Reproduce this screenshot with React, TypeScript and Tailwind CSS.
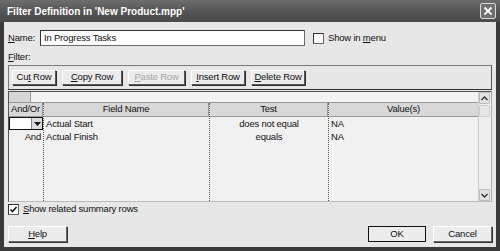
import React from 'react';

const font = { fontFamily: '"Liberation Sans", Arial, sans-serif' };

const U: React.FC<{ children: React.ReactNode }> = ({ children }) => <span className="underline underline-offset-1">{children}</span>;

const ToolButton: React.FC<{ children: React.ReactNode; disabled?: boolean; w: string }> = ({ children, disabled, w }) => (
  <div
    className={`${w} h-[15px] flex items-center justify-center bg-[#ebebeb] border border-t-[#ffffff] border-l-[#ffffff] border-r-[#5a5a5a] border-b-[#5a5a5a] shadow-[1px_1px_0_#2e2e2e] ${disabled ? 'text-[#a8a8a8]' : 'text-[#111]'}`}
  >
    <span className="whitespace-nowrap">{children}</span>
  </div>
);

const DialogButton: React.FC<{ children: React.ReactNode; def?: boolean; w: string }> = ({ children, def, w }) => (
  <div
    className={`${w} h-[16px] flex items-center justify-center text-[#111] bg-[#ececec] ${def ? 'border border-[#111]' : 'border border-t-[#ffffff] border-l-[#ffffff] border-r-[#6a6a6a] border-b-[#6a6a6a] shadow-[1px_1px_0_#333]'}`}
  >
    <span className="whitespace-nowrap">{children}</span>
  </div>
);

const cols = [
  { w: 'w-[35px]', head: 'And/Or', rows: ['', 'And'], align: 'text-right' },
  { w: 'w-[166px]', head: 'Field Name', rows: ['Actual Start', 'Actual Finish'], align: 'text-left' },
  { w: 'w-[119px]', head: 'Test', rows: ['does not equal', 'equals'], align: 'text-center' },
  { w: 'w-[149px]', head: 'Value(s)', rows: ['NA', 'NA'], align: 'text-left' },
];

export default function App() {
  return (
    <div className="w-[500px] h-[251px] bg-[#3a3a3a] flex flex-col text-[#111] text-[9.5px] tracking-[-0.2px] overflow-hidden" style={font}>
      {/* title bar */}
      <div className="h-[22px] flex items-center justify-between pl-[7px] pr-[4px] bg-gradient-to-b from-[#6e6e6e] via-[#555555] to-[#4a4a4a]">
        <span className="text-white font-bold text-[10px] tracking-[0px]">Filter Definition in 'New Product.mpp'</span>
        <div className="w-[16px] h-[16px] rounded-[2px] border border-[#d8d8d8] bg-[#707070] flex items-center justify-center">
          <svg width="10" height="10" viewBox="0 0 10 10">
            <path d="M1.5 1.5 L8.5 8.5 M8.5 1.5 L1.5 8.5" stroke="#fff" strokeWidth="1.8" />
          </svg>
        </div>
      </div>

      {/* body */}
      <div className="flex-1 mx-[4px] mb-[4px] bg-[#e7e7e7] px-[4px] flex flex-col">
        <div className="flex items-center mt-[8px] h-[16px]">
          <span className="w-[32px]"><U>N</U>ame:</span>
          <div className="w-[265px] h-[16px] bg-white border border-[#6a6a6a] border-t-[#333] border-l-[#333] flex items-center pl-[3px]">
            In Progress Tasks
          </div>
          <div className="ml-[8px] w-[11px] h-[11px] bg-white border border-[#666] border-t-[#333] border-l-[#333]" />
          <span className="ml-[4px]">Show in <U>m</U>enu</span>
        </div>

        <div className="mt-[5px] h-[11px] leading-[11px]"><U>F</U>ilter:</div>

        {/* tool panel */}
        <div className="mt-[3px] h-[25px] border border-[#7a7a7a] border-b-[#333] border-r-[#555] flex items-center gap-[6px] pl-[3px]">
          <ToolButton w="w-[44px]">Cu<U>t</U> Row</ToolButton>
          <ToolButton w="w-[60px]"><U>C</U>opy Row</ToolButton>
          <ToolButton w="w-[57px]" disabled><U>P</U>aste Row</ToolButton>
          <ToolButton w="w-[54px]"><U>I</U>nsert Row</ToolButton>
          <ToolButton w="w-[54px]"><U>D</U>elete Row</ToolButton>
        </div>

        {/* grid */}
        <div className="mt-[1px] h-[111px] border border-[#555] border-r-[#aaa] border-b-[#bbb] bg-[#f1f1f1] flex">
          <div className="w-[469px] flex flex-col">
            <div className="h-[11px] flex border-b border-[#999]">
              <div className="w-[22px] bg-[#d6d6d6] border-r border-[#999]" />
              <div className="flex-1 bg-[#f3f3f3]" />
            </div>
            <div className="flex flex-1">
              {cols.map((c, i) => (
                <div key={i} className={`${c.w} flex flex-col ${i < 3 ? 'border-r border-dotted border-[#555]' : ''}`}>
                  <div className={`h-[14px] bg-[#d8d8d8] border-b border-[#999] ${i < 3 ? 'border-r border-r-[#999]' : ''} flex items-center justify-center whitespace-nowrap`}>
                    {c.head}
                  </div>
                  {c.rows.map((r, j) =>
                    i === 0 && j === 0 ? (
                      <div key={j} className="h-[13px] flex border border-[#111] bg-white">
                        <div className="flex-1" />
                        <div className="w-[11px] bg-[#dcdcdc] border-l border-[#888] flex items-center justify-center">
                          <svg width="7" height="4" viewBox="0 0 7 4"><path d="M0 0 L7 0 L3.5 4 Z" fill="#111" /></svg>
                        </div>
                      </div>
                    ) : (
                      <div key={j} className={`h-[13px] leading-[13px] px-[2px] ${c.align} whitespace-nowrap`}>{r}</div>
                    )
                  )}
                </div>
              ))}
            </div>
          </div>
          {/* scrollbar */}
          <div className="w-[12px] flex flex-col bg-[#eeeeee] border-l border-[#ccc]">
            <div className="h-[12px] border border-[#bbb] bg-[#e2e2e2] rounded-[1px] flex items-center justify-center">
              <svg width="7" height="5" viewBox="0 0 7 5"><path d="M0.5 4 L3.5 1 L6.5 4" stroke="#333" strokeWidth="1.4" fill="none" /></svg>
            </div>
            <div className="h-[12px] mt-[1px] border border-[#cfcfcf] bg-[#e6e6e6] rounded-[1px]" />
            <div className="flex-1" />
            <div className="h-[12px] border border-[#bbb] bg-[#e2e2e2] rounded-[1px] flex items-center justify-center">
              <svg width="7" height="5" viewBox="0 0 7 5"><path d="M0.5 1 L3.5 4 L6.5 1" stroke="#333" strokeWidth="1.4" fill="none" /></svg>
            </div>
          </div>
        </div>

        <div className="flex items-center mt-[1px] h-[12px]">
          <div className="w-[11px] h-[11px] bg-white border border-[#666] border-t-[#333] border-l-[#333] flex items-center justify-center">
            <svg width="9" height="9" viewBox="0 0 9 9"><path d="M1.5 4.5 L3.5 6.5 L7.5 2" stroke="#111" strokeWidth="1.6" fill="none" /></svg>
          </div>
          <span className="ml-[4px]"><U>S</U>how related summary rows</span>
        </div>

        <div className="flex mt-[11px] items-center">
          <DialogButton w="w-[59px]"><U>H</U>elp</DialogButton>
          <div className="flex-1" />
          <DialogButton w="w-[58px]" def>OK</DialogButton>
          <div className="w-[7px]" />
          <DialogButton w="w-[59px]">Cancel</DialogButton>
        </div>
      </div>
    </div>
  );
}
